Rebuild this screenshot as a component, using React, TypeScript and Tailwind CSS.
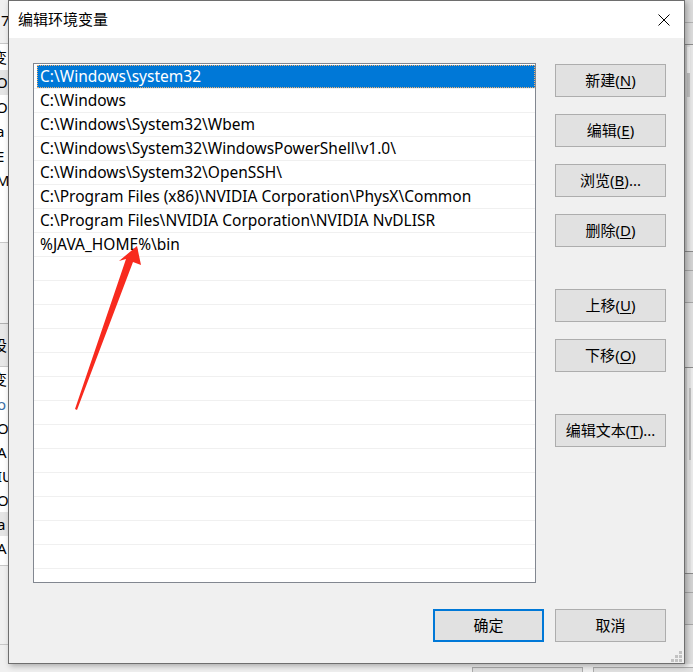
import React from "react";

const paths = [
  "C:\\Windows\\system32",
  "C:\\Windows",
  "C:\\Windows\\System32\\Wbem",
  "C:\\Windows\\System32\\WindowsPowerShell\\v1.0\\",
  "C:\\Windows\\System32\\OpenSSH\\",
  "C:\\Program Files (x86)\\NVIDIA Corporation\\PhysX\\Common",
  "C:\\Program Files\\NVIDIA Corporation\\NVIDIA NvDLISR",
  "%JAVA_HOME%\\bin",
];

function Btn({
  label,
  mn,
  suffix = "",
  primary = false,
}: {
  label: string;
  mn?: string;
  suffix?: string;
  primary?: boolean;
}) {
  return (
    <div
      className={
        "w-[111px] h-[33px] bg-[#e1e1e1] flex items-center justify-center text-[15px] text-black leading-none " +
        (primary ? "border-2 border-[#0078d7]" : "border border-[#adadad]")
      }
    >
      <span>
        {label}
        {mn ? (
          <>
            (<span className="underline underline-offset-2">{mn}</span>)
          </>
        ) : null}
        {suffix}
      </span>
    </div>
  );
}

function LeftStrip() {
  return (
    <div className="absolute left-0 top-0 w-[8px] h-[672px] overflow-hidden bg-[#f0f0f0] text-[15px] text-black">
      <div className="h-[43px] relative">
        <span className="absolute left-[1px] top-[9px]">7</span>
      </div>
      <div className="h-px bg-[#c8c8c8]" />
      <div className="h-[26px] bg-white relative">
        <span className="absolute left-[-8px] top-[2px]">变</span>
      </div>
      <div className="h-[172px] bg-white">
        {["Or", "Or", "a", "E", "M", "", ""].map((t, i) => (
          <div
            key={i}
            className={"h-[24.5px] flex items-center " + (i === 0 ? "bg-[#e5e5e5]" : "")}
          >
            <span className="ml-[-4px]">{t}</span>
          </div>
        ))}
      </div>
      <div className="h-px bg-[#c8c8c8]" />
      <div className="h-[80px]" />
      <div className="h-px bg-[#b0b0b0]" />
      <div className="h-[42px] bg-[#e8e8e8] relative">
        <span className="absolute left-[-8px] top-[10px]">设</span>
      </div>
      <div className="h-px bg-[#c8c8c8]" />
      <div className="h-[198px] bg-white overflow-hidden">
        <div className="h-[25px] flex items-center">
          <span className="ml-[-8px]">变</span>
        </div>
        {["o", "Or", "A", "IU", "OS", "a", "A", "P"].map((t, i) => (
          <div
            key={i}
            className={"h-[24px] flex items-center " + (i === 5 ? "bg-[#e5e5e5]" : "")}
          >
            <span className={"ml-[-3px] " + (i === 0 ? "text-[#3a6ea5]" : "")}>{t}</span>
          </div>
        ))}
      </div>
      <div className="h-px bg-[#c8c8c8]" />
      <div className="h-[78px]" />
      <div className="h-px bg-[#c8c8c8]" />
    </div>
  );
}

function RightStrip() {
  return (
    <div className="absolute right-0 top-0 w-[9px] h-[672px] overflow-hidden bg-[#e4e4e4] flex flex-col">
      <div className="h-[22px] bg-[#dcdcdc]" />
      <div className="h-px bg-[#b4b4b4]" />
      <div className="h-[21px] bg-[#dcdcdc]" />
      <div className="h-px bg-[#8c8c8c]" />
      <div className="h-[206px] flex">
        <div className="w-[3px] bg-[#d0d0d0]" />
        <div className="w-[3px] flex flex-col">
          <div className="h-[26px] bg-[#f4f4f4] mt-[2px]" />
          <div className="h-[24px] bg-[#c4c4c4]" />
        </div>
        <div className="flex-1 bg-[#e8e8e8]" />
      </div>
      <div className="h-px bg-[#8c8c8c]" />
      <div className="h-[18px] bg-[#d4d4d4]" />
      <div className="h-px bg-[#a8a8a8]" />
      <div className="h-[31px] bg-[#d4d4d4]" />
      <div className="h-px bg-[#a8a8a8]" />
      <div className="h-[64px] bg-[#e0e0e0]" />
      <div className="h-px bg-[#8c8c8c]" />
      <div className="h-[205px] flex">
        <div className="w-[3px] bg-[#d8d8d8]" />
        <div className="w-[2px] bg-[#ececec]" />
        <div className="w-[2px] flex flex-col">
          <div className="h-[20px]" />
          <div className="h-[72px] bg-[#c0c0c0]" />
        </div>
        <div className="flex-1 bg-[#ececec]" />
      </div>
      <div className="h-px bg-[#8c8c8c]" />
      <div className="h-[18px] bg-[#d4d4d4]" />
      <div className="h-px bg-[#a8a8a8]" />
      <div className="h-[31px] bg-[#d4d4d4]" />
      <div className="h-px bg-[#a8a8a8]" />
      <div className="flex-1 bg-[#e0e0e0]" />
    </div>
  );
}

function BottomStrip() {
  return (
    <div className="absolute left-0 bottom-0 w-[693px] h-[8px] bg-[#f0f0f0]">
      <div className="absolute left-[472px] top-[3px] w-[111px] h-[10px] border border-[#adadad] bg-[#e1e1e1]" />
      <div className="absolute left-[593px] top-[3px] w-[111px] h-[10px] border border-[#adadad] bg-[#e1e1e1]" />
    </div>
  );
}

export default function App() {
  const rows = [...paths, ...Array.from({ length: 14 }, () => "")];
  return (
    <div className="relative w-[693px] h-[672px] overflow-hidden bg-[#f0f0f0] font-['Noto_Sans','Noto_Sans_CJK_SC',sans-serif]">
      <LeftStrip />
      <RightStrip />
      <BottomStrip />

      {/* Dialog window */}
      <div className="absolute left-[8px] top-0 w-[677px] h-[664px] border border-[#6e6e6e] bg-[#f0f0f0] shadow-[2px_2px_6px_rgba(0,0,0,0.3)] flex flex-col">
        {/* Title bar */}
        <div className="h-[37px] bg-white flex items-center justify-between pl-[9px] pr-[14px]">
          <span className="text-[15px] text-black font-['Noto_Sans_CJK_SC',sans-serif]">编辑环境变量</span>
          <svg width="12" height="12" viewBox="0 0 12 12" className="block">
            <path d="M0.5 0.5 L11.5 11.5 M11.5 0.5 L0.5 11.5" stroke="#000" strokeWidth="1" fill="none" />
          </svg>
        </div>

        {/* Body */}
        <div className="flex-1 flex flex-col pl-[24px] pr-[18px] pt-[25px] pb-[21px] relative">
          <div className="flex gap-[19px]">
            {/* List */}
            <div className="w-[503px] h-[520px] bg-white border border-[#828790] pt-px overflow-hidden">
              {rows.map((p, i) => (
                <div key={i} className="h-[24px] border-b border-[#f0f0f0] flex">
                  <div
                    className={
                      "ml-[3px] flex-1 flex items-center pl-[3px] pt-px text-[15.5px] whitespace-nowrap " +
                      (i === 0
                        ? "bg-[#0078d7] text-white outline-1 outline-dotted outline-[#f0b070] -outline-offset-1"
                        : "text-black")
                    }
                  >
                    {p}
                  </div>
                </div>
              ))}
            </div>

            {/* Buttons column */}
            <div className="w-[111px] flex flex-col pt-px">
              <Btn label="新建" mn="N" />
              <div className="h-[17px]" />
              <Btn label="编辑" mn="E" />
              <div className="h-[17px]" />
              <Btn label="浏览" mn="B" suffix="..." />
              <div className="h-[17px]" />
              <Btn label="删除" mn="D" />
              <div className="h-[42px]" />
              <Btn label="上移" mn="U" />
              <div className="h-[17px]" />
              <Btn label="下移" mn="O" />
              <div className="h-[42px]" />
              <Btn label="编辑文本" mn="T" suffix="..." />
            </div>
          </div>

          <div className="flex justify-end gap-[11px] mt-[26px]">
            <Btn label="确定" primary />
            <Btn label="取消" />
          </div>

          {/* Resize grip */}
          <div className="absolute right-[2px] bottom-[1px] grid grid-cols-3 gap-px w-[11px]">
            <div className="w-[3px] h-[3px]" />
            <div className="w-[3px] h-[3px]" />
            <div className="w-[3px] h-[3px] bg-[#c2c2c2]" />
            <div className="w-[3px] h-[3px]" />
            <div className="w-[3px] h-[3px] bg-[#c2c2c2]" />
            <div className="w-[3px] h-[3px] bg-[#c2c2c2]" />
            <div className="w-[3px] h-[3px] bg-[#c2c2c2]" />
            <div className="w-[3px] h-[3px] bg-[#c2c2c2]" />
            <div className="w-[3px] h-[3px] bg-[#c2c2c2]" />
          </div>
        </div>
      </div>

      {/* Red annotation arrow */}
      <svg className="absolute left-0 top-0 pointer-events-none" width="693" height="672" viewBox="0 0 693 672">
        <polygon
          points="137,246 141,265 133,262 77,410 75,409 126,259 119,261"
          fill="#f82a1e"
        />
      </svg>
    </div>
  );
}
